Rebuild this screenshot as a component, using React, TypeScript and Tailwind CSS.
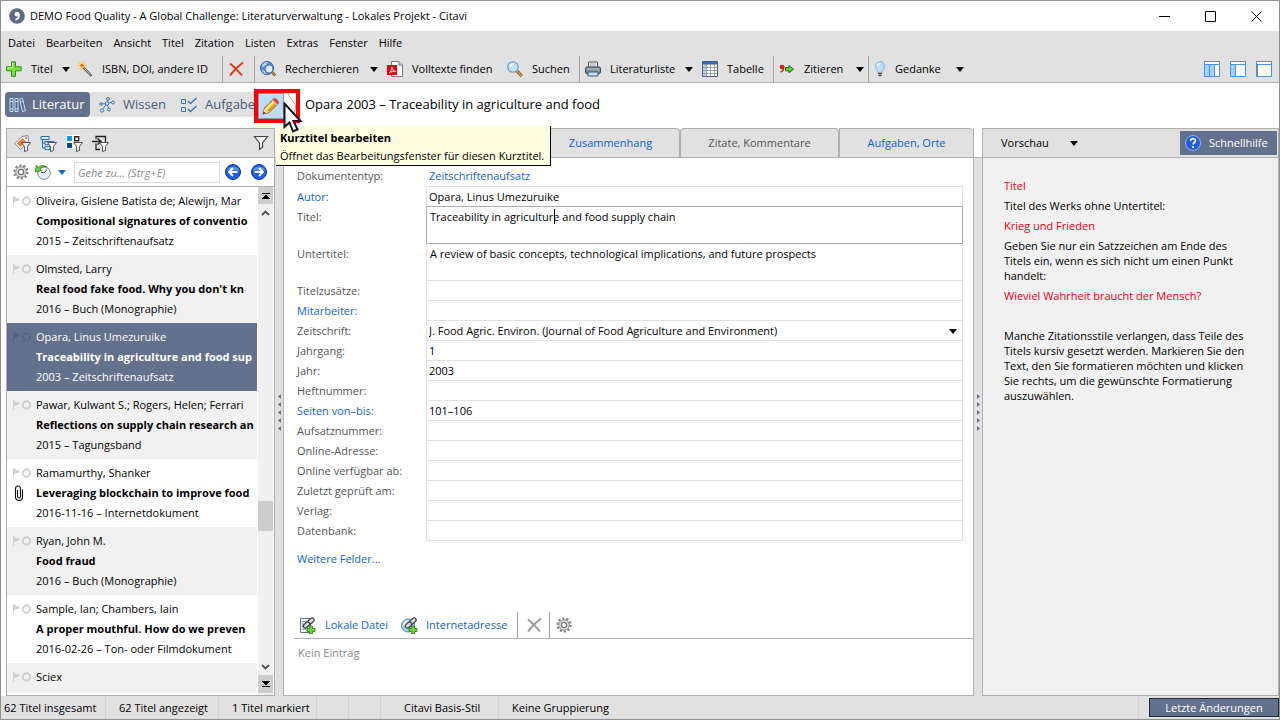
import { clsx } from 'clsx'
import type { ReactNode } from 'react'

/* ---------- icons ---------- */

const Svg = ({ children, w = 16, h = 16 }: { children: ReactNode; w?: number; h?: number }) => (
  <svg width={w} height={h} viewBox={`0 0 ${w} ${h}`} fill="none" className="shrink-0" aria-hidden="true">
    {children}
  </svg>
)

const Caret = ({ color = '#000' }: { color?: string }) => (
  <Svg w={8} h={5}><path d="M0 0h8L4 5z" fill={color} /></Svg>
)

const AppLogo = () => (
  <Svg>
    <circle cx="8" cy="8" r="7.8" fill="#5f6b85" />
    <circle cx="8" cy="6.200" r="2.400" fill="#fff" />
    <path d="M9.800 5.500c.8 3-.6 5.300-3.300 6.500" stroke="#fff" strokeWidth="1.600" />
  </Svg>
)

const PlusIcon = () => (
  <Svg>
    <path d="M5.500 .800h4v5h5.700v4H9.500v5.500h-4V9.800H.500v-4h5z" fill="#7be03c" stroke="#2f8d1c" />
    <path d="M6.500 2v4.800H1.600" stroke="#d3f7b5" />
  </Svg>
)

const WandIcon = () => (
  <Svg>
    <path d="M6.500 6.500l8 8.500" stroke="#555" strokeWidth="2.400" />
    <path d="M8 8l6 6.300" stroke="#bbb" strokeWidth="1" />
    <path d="M5 0v9M0 4.500h10M1.500 1l7 7M8.500 1l-7 7" stroke="#f6c524" strokeWidth="1" />
    <circle cx="5" cy="4.500" r="1.600" fill="#e8632a" />
  </Svg>
)

const DeleteIcon = ({ color = '#e2341d' }: { color?: string }) => (
  <Svg>
    <path d="M2 2.500C6 5.500 10 9.500 14 14.500M15 1.500C9.500 5.500 5.500 9.500 2 14.500" stroke={color} strokeWidth="2" />
  </Svg>
)

const GlobeSearchIcon = () => (
  <Svg>
    <circle cx="7" cy="7" r="6.500" fill="#5b8fd6" stroke="#2f5fa8" />
    <path d="M2 4c2-2.500 4-3 6-3L6 4 3 6zM2 9l3 1 1 3c-2-.500-3.500-2-4-4z" fill="#b9d7f5" />
    <circle cx="9" cy="8" r="4" fill="#d9efff" stroke="#5a6f8e" strokeWidth="1.200" />
    <path d="M12 11l3 3.500" stroke="#3b2b20" strokeWidth="2.600" />
    <path d="M12 11l3 3.500" stroke="#e0923e" strokeWidth="1.200" />
  </Svg>
)

const PdfIcon = () => (
  <Svg>
    <path d="M4.500 .500h7.500l3.500 3.500v11.500h-11z" fill="#fff" stroke="#777" />
    <path d="M12 .500V4h3.500" stroke="#777" fill="#ddd" />
    <path d="M0 4h10v10H0z" fill="#d90b0b" />
    <path d="M2 12C4 10.500 5 8 4.800 6c.7 2.500 1.700 4 3.700 4.500-2-.300-4.500 0-6.500 1.500z" stroke="#fff" strokeWidth=".900" />
  </Svg>
)

const SearchIcon = () => (
  <Svg>
    <path d="M10 10l4.800 5" stroke="#7a4a1c" strokeWidth="3" />
    <path d="M10 10l4.800 5" stroke="#e79b4c" strokeWidth="1.500" />
    <circle cx="6" cy="6" r="5.200" fill="#bfe3fb" stroke="#7b9cc0" strokeWidth="1.300" />
    <path d="M3 5.500C3.500 4 5 3 7 3.200" stroke="#fff" strokeWidth="1.500" />
  </Svg>
)

const PrinterIcon = () => (
  <Svg>
    <path d="M3.500 1h9v6h-9z" fill="#f5f7fa" stroke="#555" />
    <path d="M5 3h6M5 5h6" stroke="#9aa3b0" />
    <rect x=".5" y="6" width="15" height="6.500" rx="1.500" fill="#7c899b" stroke="#3a4452" />
    <path d="M1.500 8h13" stroke="#c7d0dc" />
    <path d="M3 11h10v4H3z" fill="#bfe0ff" stroke="#4d5a6b" />
    <path d="M12 9.500h2" stroke="#79d13c" />
  </Svg>
)

const TableIcon = () => (
  <Svg>
    <path d="M.500 .500h15v15H.500z" fill="#fff" stroke="#4f5f7c" />
    <path d="M1 1h14v2H1z" fill="#2f6fd0" />
    <path d="M1 3h3v12H1z" fill="#c5d2e6" />
    <path d="M1 3.500h14M1 6.500h14M1 9.500h14M1 12.500h14M4.500 3v12M8.500 3v12M12.500 3v12" stroke="#7f8ca3" strokeWidth=".800" />
  </Svg>
)

const CiteIcon = () => (
  <Svg>
    <circle cx="3" cy="6" r="2.300" fill="#e01b1b" />
    <path d="M4.600 5.500c.5 2.500-.5 4.500-3 5.500" stroke="#e01b1b" strokeWidth="1.500" />
    <path d="M6.500 6.500h3.500V4.500l4.500 3.700L10 11.800V9.800H6.500z" fill="#5fd42f" stroke="#176b12" />
  </Svg>
)

const BulbIcon = () => (
  <Svg w={12}>
    <path d="M6 .500c3 0 4.500 2 4.500 4.800C10.500 8 8.300 9 8 11.500H4C3.700 9 1.500 8 1.500 5.300 1.500 2.500 3 .500 6 .500z" fill="#bcdcfb" stroke="#8fb2dd" />
    <path d="M3.500 5C3.600 3.500 4.500 2.500 6 2.500" stroke="#fff" strokeWidth="1.500" />
    <path d="M4 12.500h4M4.500 14.500h3" stroke="#4d5560" strokeWidth="1.500" />
  </Svg>
)

const LayoutIcon = ({ cols }: { cols: number }) => (
  <Svg>
    <path d="M.500 .500h15v15H.500z" fill="#fff" stroke="#3f93e8" />
    <path d="M0 .500h16M15.500 0v4" stroke="#858585" />
    <path d="M0 3.500h16" stroke="#3f93e8" />
    {cols > 0 && <path d="M1 4h4v11H1z" fill="#a6d2fa" />}
    {cols > 1 && <path d="M6 4h4v11H6z" fill="#a6d2fa" />}
    <path d={cols > 0 ? 'M5.500 4v11' : 'M1.500 4v11'} stroke={cols > 0 ? '#3f93e8' : '#858585'} />
    {cols > 1 && <path d="M10.500 4v11" stroke="#3f93e8" />}
  </Svg>
)

const BooksIcon = () => (
  <Svg w={17}>
    <path d="M1 1.500h3v13H1zM6 1.500h3v13H6zM10.700 2l2.800-.700 2.800 12.500-2.800.700z" fill="#56688c" stroke="#c4e0ff" />
    <path d="M1 4.500h3M6 4.500h3M1 12h3M6 12h3M11.300 5l2.800-.700" stroke="#c4e0ff" />
  </Svg>
)

const KnowledgeIcon = () => (
  <Svg>
    <path d="M2 7l6-.500 6-1.500M8 6.500L9 2M8 6.500l2 6M8 6.500L3 13" stroke="#3e7fc6" />
    <g fill="#e8f1fb" stroke="#3273bd">
      <circle cx="2" cy="7" r="1.300" /><circle cx="8" cy="6.500" r="1.700" /><circle cx="9" cy="2" r="1.400" />
      <circle cx="14" cy="5.500" r="1.500" /><circle cx="10" cy="12.500" r="1.400" /><circle cx="3" cy="13.500" r="1.600" />
    </g>
  </Svg>
)

const TasksIcon = () => (
  <Svg>
    <path d="M.500 2.500h4v4h-4zM.500 10.500h4v4h-4z" stroke="#3273bd" />
    <path d="M7 4l2.500 2.500L15.500 1M7 12l2.500 2.500L15.500 9" stroke="#3273bd" strokeWidth="1.300" />
  </Svg>
)

const PencilIcon = () => (
  <Svg w={18} h={18}>
    <path d="M1 17l1.500-6L12 1.500l4.500 4.500L7 15.500z" fill="#fbd23a" stroke="#8a5a12" />
    <path d="M4 12l9-9" stroke="#fff3a8" strokeWidth="1.500" />
    <path d="M6 14l9-8.500" stroke="#e28b1c" strokeWidth="1.500" />
    <path d="M10.500 3l4.500 4.500" stroke="#c9ced6" strokeWidth="2" />
    <path d="M12 1.500c1.500-1.500 5.500 2 4.500 4.500l-1.300 1.200-4.500-4.500z" fill="#e2492f" />
    <path d="M1 17l1.500-5.500L6.500 15.500z" fill="#f3dcb8" />
    <path d="M1 17l.7-2.500 1.800 1.800z" fill="#222" />
  </Svg>
)

const Funnel = () => (
  <path d="M7.500 7.500h9l-3 4v4l-3 1v-5z" fill="#f2f2f2" stroke="#555" />
)

const TagFilterIcon = () => (
  <Svg w={17} h={17}>
    <path d="M.800 8.500L8 1.500l6-1 .500 5.500-8 8.500z" fill="#f6f6f6" stroke="#8a8a8a" />
    <path d="M3 8.500L8.500 3l3.500 3.500L6.500 12z" fill="#ef7b2b" />
    <circle cx="12" cy="3" r="1" fill="#888" />
    <Funnel />
  </Svg>
)

const TreeFilterIcon = () => (
  <Svg w={17} h={17}>
    <path d="M1 1.500h8v3H1zM5 6.500h9v3H5zM5 11.500h5v3H5z" fill="#d9ebfc" stroke="#2670bd" />
    <path d="M2.500 5v8H5M2.500 8H5" stroke="#2670bd" />
    <Funnel />
  </Svg>
)

const CategoryFilterIcon = () => (
  <Svg w={17} h={17}>
    <path d="M0 0h14v14H0z" fill="#fff" />
    <path d="M1 1h5v5H1z" fill="#1898f5" />
    <path d="M1 8h5v5H1z" fill="#004b9b" />
    <path d="M8.700 1.700h4v4h-4z" stroke="#222" strokeWidth="1.400" />
    <Funnel />
  </Svg>
)

const ImportFilterIcon = () => (
  <Svg w={17} h={17}>
    <path d="M4 4V1.500h9.500V7M4 8.500v6h4" stroke="#222" strokeWidth="1.300" />
    <path d="M0 6.500h8M5.500 3.500L9 6.500l-3.500 3" stroke="#222" strokeWidth="1.500" />
    <Funnel />
  </Svg>
)

const FunnelIcon = () => (
  <Svg>
    <path d="M1.500 1.500h13L9.500 8v4.500l-3 2V8z" fill="#fafafa" stroke="#444" strokeWidth="1.200" />
  </Svg>
)

const GearIcon = () => (
  <Svg>
    <circle cx="8" cy="8" r="6.600" stroke="#808080" strokeWidth="2" strokeDasharray="2.300 1.850" />
    <circle cx="8" cy="8" r="5.300" fill="#dcdcdc" stroke="#8c8c8c" strokeWidth="1" />
    <circle cx="8" cy="8" r="2.600" fill="#fff" stroke="#777" strokeWidth="1.300" />
  </Svg>
)

const HistoryIcon = () => (
  <Svg>
    <circle cx="9" cy="9" r="6.300" fill="#e9f2fb" stroke="#75818f" />
    <path d="M9 9l3-3.500M9 9l-3-1" stroke="#444" />
    <path d="M12 3C9 .800 5.500 1 3.300 3.300L1 1.500.500 8 6.500 6.500 4.700 5C6.500 3 9.500 2.500 12 3z" fill="#6fcf3b" stroke="#2d8420" strokeWidth=".8" />
  </Svg>
)

const RoundArrowIcon = ({ back }: { back?: boolean }) => (
  <Svg>
    <circle cx="8" cy="8" r="7.500" fill="#1d5fe0" stroke="#0d3aa5" />
    <path d="M2 6.500C3.500 1.500 12.500 1.500 14 6.500z" fill="#5d94f5" />
    <path d={back ? 'M12.500 8h-8M8 4L4 8l4 4' : 'M3.500 8h8M8 4l4 4-4 4'} stroke="#fff" strokeWidth="1.800" />
  </Svg>
)

const HelpIcon = () => (
  <Svg>
    <circle cx="8" cy="8" r="7.500" fill="#1d5fe0" stroke="#8fb2f0" />
    <path d="M5.700 6c0-3.200 4.800-3 4.800-.300C10.500 7.500 8.100 7.500 8.100 9.500M8.100 11v2" stroke="#fff" strokeWidth="1.700" />
  </Svg>
)

const Chain = () => (
  <>
    <path d="M5 10l3-3M8 7l4-4" stroke="#444" strokeWidth="1.200" />
    <rect x="8.500" y="2" width="7" height="4" rx="2" transform="rotate(-42 12 4)" fill="#ddd" stroke="#444" strokeWidth="1.300" />
    <rect x="4" y="6" width="7" height="4" rx="2" transform="rotate(-42 7.500 8)" fill="#ddd" stroke="#444" strokeWidth="1.300" />
    <path d="M10.500 9h3v2.500H16v3h-2.500V17h-3v-2.500H8v-3h2.500z" fill="#6bd832" stroke="#247b16" strokeWidth=".8" />
  </>
)

const LocalFileIcon = () => (
  <Svg w={17} h={17}>
    <path d="M1.500 1.500h10v14h-10z" fill="#e8f0fa" stroke="#5f7591" />
    <path d="M3 4.500h5M3 7h3M3 9.500h2M3 12h4" stroke="#7a8ca5" />
    <Chain />
  </Svg>
)

const WebFileIcon = () => (
  <Svg w={17} h={17}>
    <circle cx="7" cy="8.500" r="6.500" fill="#a9cff5" stroke="#6089bd" />
    <path d="M2.500 6L7 3l-1 4-3 3z" fill="#f0f7ff" />
    <Chain />
  </Svg>
)

const RowMarks = ({ selected }: { selected?: boolean }) => (
  <Svg w={18} h={10}>
    <path d="M.500 0v10M1 1l5.500 2.500L1 6z" fill={selected ? '#56627b' : '#d2d2d2'} stroke={selected ? '#56627b' : '#d2d2d2'} />
    <circle cx="13.500" cy="5" r="3.700" stroke={selected ? '#56627b' : '#cfcfcf'} strokeWidth="1.900" strokeDasharray={selected ? '2 1.500' : undefined} />
  </Svg>
)

const ClipIcon = () => (
  <Svg w={10} h={16}>
    <path d="M3.500 5v6.500a1.500 1.500 0 0 0 3 0V4C6.500 0 1.500 0 1.500 4v8c0 4.500 7 4.500 7 0V4.500" stroke="#111" strokeWidth="1.100" />
  </Svg>
)

const Pointer = () => (
  <Svg w={20} h={32}>
    <path d="M1.500 1.500v23.500l5-4.500 3.500 9 4.500-2-4-8.500h7z" fill="#fff" stroke="#15171c" strokeWidth="2" />
  </Svg>
)

/* ---------- data ---------- */

const menu = ['Datei', 'Bearbeiten', 'Ansicht', 'Titel', 'Zitation', 'Listen', 'Extras', 'Fenster', 'Hilfe']

type Tool = { label: string; icon: ReactNode; width: string; arrow?: boolean; sep?: boolean }

const tools: Tool[] = [
  { label: 'Titel', icon: <PlusIcon />, width: 'w-[71px]', arrow: true },
  { label: 'ISBN, DOI, andere ID', icon: <WandIcon />, width: 'w-[151px]', sep: true },
  { label: '', icon: <DeleteIcon />, width: 'w-8', sep: true },
  { label: 'Recherchieren', icon: <GlobeSearchIcon />, width: 'w-[127px]', arrow: true },
  { label: 'Volltexte finden', icon: <PdfIcon />, width: 'w-[120px]' },
  { label: 'Suchen', icon: <SearchIcon />, width: 'w-[78px]', sep: true },
  { label: 'Literaturliste', icon: <PrinterIcon />, width: 'w-[117px]', arrow: true },
  { label: 'Tabelle', icon: <TableIcon />, width: 'w-[77px]', sep: true },
  { label: 'Zitieren', icon: <CiteIcon />, width: 'w-[95px]', arrow: true, sep: true },
  { label: 'Gedanke', icon: <BulbIcon />, width: 'w-[99px]', arrow: true },
]

type Entry = { author: string; title?: string; info?: string; clip?: boolean; selected?: boolean }

const entries: Entry[] = [
  { author: 'Oliveira, Gislene Batista de; Alewijn, Mar', title: 'Compositional signatures of conventio', info: '2015 – Zeitschriftenaufsatz' },
  { author: 'Olmsted, Larry', title: "Real food fake food. Why you don't kn", info: '2016 – Buch (Monographie)' },
  { author: 'Opara, Linus Umezuruike', title: 'Traceability in agriculture and food sup', info: '2003 – Zeitschriftenaufsatz', selected: true },
  { author: 'Pawar, Kulwant S.; Rogers, Helen; Ferrari', title: 'Reflections on supply chain research an', info: '2015 – Tagungsband' },
  { author: 'Ramamurthy, Shanker', title: 'Leveraging blockchain to improve food', info: '2016-11-16 – Internetdokument', clip: true },
  { author: 'Ryan, John M.', title: 'Food fraud', info: '2016 – Buch (Monographie)' },
  { author: 'Sample, Ian; Chambers, Iain', title: 'A proper mouthful. How do we preven', info: '2016-02-26 – Ton- oder Filmdokument' },
  { author: 'Sciex' },
]

type Field = { label: string; value?: string; link?: boolean; tall?: boolean; active?: boolean; select?: boolean }

const fields: Field[] = [
  { label: 'Autor:', value: 'Opara, Linus Umezuruike', link: true },
  { label: 'Titel:', value: 'Traceability in agriculture and food supply chain', tall: true, active: true },
  { label: 'Untertitel:', value: 'A review of basic concepts, technological implications, and future prospects', tall: true },
  { label: 'Titelzusätze:' },
  { label: 'Mitarbeiter:', link: true },
  { label: 'Zeitschrift:', value: 'J. Food Agric. Environ. (Journal of Food Agriculture and Environment)', select: true },
  { label: 'Jahrgang:', value: '1' },
  { label: 'Jahr:', value: '2003' },
  { label: 'Heftnummer:' },
  { label: 'Seiten von–bis:', value: '101–106', link: true },
  { label: 'Aufsatznummer:' },
  { label: 'Online-Adresse:' },
  { label: 'Online verfügbar ab:' },
  { label: 'Zuletzt geprüft am:' },
  { label: 'Verlag:' },
  { label: 'Datenbank:' },
]

/* ---------- parts ---------- */

const TitleBar = () => (
  <header className="flex h-[30px] shrink-0 items-center bg-white pl-2">
    <AppLogo />
    <h1 className="ml-[5px] flex-1 text-[11px]">DEMO Food Quality - A Global Challenge: Literaturverwaltung - Lokales Projekt - Citavi</h1>
    <div className="flex">
      <button aria-label="Minimieren" className="flex w-[46px] justify-center">
        <Svg w={11} h={11}><path d="M0 5.500h11" stroke="#000" /></Svg>
      </button>
      <button aria-label="Maximieren" className="flex w-[46px] justify-center">
        <Svg w={11} h={11}><path d="M.500 .500h10v10H.500z" stroke="#000" /></Svg>
      </button>
      <button aria-label="Schließen" className="flex w-[46px] justify-center">
        <Svg w={11} h={11}><path d="M.500 .500l10 10M10.500 .500l-10 10" stroke="#000" /></Svg>
      </button>
    </div>
  </header>
)

const Toolbar = () => (
  <div className="flex h-[27px] shrink-0 items-stretch border-b border-[#b0b0b0] bg-[#e1e1e1]">
    {tools.map((t, i) => (
      <button
        key={i}
        aria-label={t.label || 'Löschen'}
        className={clsx(
          'flex items-center gap-[9px] whitespace-nowrap pl-[5px] pr-1',
          t.width,
          t.sep && 'border-r border-[#a5a5a5]',
        )}
      >
        {t.icon}
        {t.label && <span>{t.label}</span>}
        {t.arrow && <span className="ml-auto"><Caret /></span>}
      </button>
    ))}
    <div className="ml-auto flex items-center gap-[10px] pr-[7px]">
      {[2, 1, 0].map((n) => (
        <button key={n} aria-label={`Ansicht ${n + 1}`}><LayoutIcon cols={n} /></button>
      ))}
    </div>
  </div>
)

const Navigation = () => (
  <div className="relative flex h-[45px] shrink-0 items-start bg-white pl-1 text-[13px]">
    <nav className="mt-[9px] flex h-[25px] w-[249px] items-stretch rounded-l-sm bg-[#e1e1e1] text-[#4a5a78]">
      <button className="flex w-[85px] shrink-0 items-center gap-[6px] rounded-sm bg-[#64718c] pl-1 text-white">
        <BooksIcon /> Literatur
      </button>
      <button className="flex w-[84px] shrink-0 items-center gap-2 pl-[9px]">
        <KnowledgeIcon /> Wissen
      </button>
      <button className="flex shrink-0 items-center gap-2 pl-[7px]">
        <TasksIcon /> Aufgabe
      </button>
    </nav>
    <div className="relative mt-[6px] flex h-[34px] w-[46px] border-4 border-[#ff0000] bg-white">
      <button aria-label="Kurztitel bearbeiten" className="flex w-[26px] items-center justify-center border border-[#8a9bb0] bg-[#bddcf8]">
        <PencilIcon />
      </button>
      <Svg w={12} h={26}><path d="M4 0c2 6 7 9 7.500 13S9 20 9 26" stroke="#aaa" /></Svg>
    </div>
    <h2 className="mt-[11px] pl-[5px] leading-5">Opara 2003 – Traceability in agriculture and food</h2>
    <div className="absolute left-[282px] top-[19px] z-20">
      <Pointer />
    </div>
    <div role="tooltip" className="absolute left-[275px] top-[43px] z-10 h-[40px] w-[275px] border-b border-r border-black bg-[#ffffe1] px-1 pt-[3px] text-[11px] leading-[18px]">
      <p className="font-bold">Kurztitel bearbeiten</p>
      <p className="whitespace-nowrap">Öffnet das Bearbeitungsfenster für diesen Kurztitel.</p>
    </div>
  </div>
)

const EntryRow = ({ entry, shaded }: { entry: Entry; shaded: boolean }) => (
  <li
    className={clsx(
      'flex h-[68px] shrink-0 pl-[6px] pt-1 leading-5',
      entry.selected ? 'bg-[#64718c] text-white' : shaded ? 'bg-[#f1f1f1]' : 'bg-white',
    )}
  >
    <div className="flex w-[23px] shrink-0 flex-col">
      <span className="flex h-5 items-center"><RowMarks selected={entry.selected} /></span>
      {entry.clip && <span className="flex h-5 items-center pl-px"><ClipIcon /></span>}
    </div>
    <div className="min-w-0 flex-1 overflow-hidden whitespace-nowrap">
      <p>{entry.author}</p>
      <p className="font-bold">{entry.title}</p>
      <p>{entry.info}</p>
    </div>
  </li>
)

const Scrollbar = () => (
  <div className="ml-px mr-px flex w-[15px] shrink-0 flex-col items-center bg-[#f0f0f0] pb-[2px]">
    <button aria-label="Zum Anfang" className="flex h-[17px] w-full items-center justify-center bg-[#cdcdcd]">
      <Svg w={8} h={6}><path d="M0 .500h8M0 6l4-4 4 4z" stroke="#000" strokeWidth="1" fill="#000" /></Svg>
    </button>
    <button aria-label="Nach oben" className="flex h-[18px] items-center">
      <Svg w={9} h={6}><path d="M1 5l3.500-3.500L8 5" stroke="#555" strokeWidth="1.800" /></Svg>
    </button>
    <div className="flex-[280]" />
    <div className="h-[30px] w-full bg-[#cdcdcd]" />
    <div className="flex-[127]" />
    <button aria-label="Nach unten" className="flex h-[17px] items-center">
      <Svg w={9} h={6}><path d="M1 1l3.500 3.500L8 1" stroke="#555" strokeWidth="1.800" /></Svg>
    </button>
    <button aria-label="Zum Ende" className="flex h-[18px] w-full items-center justify-center bg-[#cdcdcd]">
      <Svg w={8} h={6}><path d="M0 5.500h8M0 0l4 4 4-4z" stroke="#000" strokeWidth="1" fill="#000" /></Svg>
    </button>
  </div>
)

const TitleList = () => (
  <aside className="flex w-[269px] shrink-0 flex-col border border-[#a9acb0] bg-white">
    <div className="flex h-[29px] shrink-0 items-center gap-[9px] border-b border-[#b0b0b0] bg-[#e1e1e1] pl-[7px] pr-[5px]">
      <button aria-label="Schlagwörter"><TagFilterIcon /></button>
      <button aria-label="Kategorien"><TreeFilterIcon /></button>
      <button aria-label="Gruppen"><CategoryFilterIcon /></button>
      <button aria-label="Importe"><ImportFilterIcon /></button>
      <button aria-label="Filter" className="ml-auto"><FunnelIcon /></button>
    </div>
    <div className="flex h-[29px] shrink-0 items-center border-b border-[#b0b0b0] pl-[6px] pr-[7px]">
      <button aria-label="Optionen"><GearIcon /></button>
      <button aria-label="Verlauf" className="ml-[6px] flex items-center gap-[7px]"><HistoryIcon /><Caret color="#0f6fd1" /></button>
      <input
        aria-label="Gehe zu"
        placeholder="Gehe zu... (Strg+E)"
        className="ml-2 mr-[5px] h-[21px] min-w-0 flex-1 border border-[#dcdcdc] px-[3px] italic placeholder:text-[#8a8a8a]"
      />
      <button aria-label="Zurück"><RoundArrowIcon back /></button>
      <button aria-label="Vorwärts" className="ml-[10px]"><RoundArrowIcon /></button>
    </div>
    <div className="flex min-h-0 flex-1">
      <ul className="mb-[2px] flex min-w-0 flex-1 flex-col overflow-hidden">
        {entries.map((e, i) => <EntryRow key={e.author} entry={e} shaded={i % 2 === 1} />)}
      </ul>
      <Scrollbar />
    </div>
  </aside>
)

const Splitter = ({ left }: { left?: boolean }) => (
  <div className="mt-[29px] flex w-2 shrink-0 flex-col items-center justify-center gap-[3px] border-t border-[#b0b0b0] bg-[#e1e1e1] pb-[29px]">
    {[0, 1, 2, 3, 4].map((n) => (
      <Svg key={n} w={3} h={5}><path d={left ? 'M3 0v5L0 2.500z' : 'M0 0v5l3-2.500z'} fill="#64718c" /></Svg>
    ))}
  </div>
)

const FieldRow = ({ field }: { field: Field }) => {
  const id = field.label.replace(/\W/g, '').toLowerCase()
  return (
    <div className={clsx('flex', field.tall ? 'h-[37px]' : 'h-5')}>
      <label htmlFor={id} className={clsx('w-[129px] shrink-0 whitespace-nowrap pt-px leading-5', field.link ? 'text-[#0d63cc]' : 'text-[#555]')}>
        {field.label}
      </label>
      <div
        className={clsx(
          'relative -mb-px flex min-w-0 flex-1 border',
          field.active ? 'z-10 border-[#adb0b0]' : 'border-[#e4e0e2]',
        )}
      >
        {field.tall && <textarea id={id} defaultValue={field.value} className="block w-full resize-none overflow-hidden px-[3px] leading-5" />}
        {!field.tall && !field.select && <input id={id} defaultValue={field.value} className="w-full px-[2px] pt-[2px]" />}
        {field.select && (
          <>
            <select id={id} className="w-full appearance-none px-[2px] pt-[2px]">
              <option>{field.value}</option>
            </select>
            <span className="pointer-events-none absolute right-[5px] top-2"><Caret /></span>
          </>
        )}
        {field.active && <span className="absolute left-[127px] top-[2px] h-[15px] w-px bg-black" />}
      </div>
    </div>
  )
}

const Editor = () => (
  <main className="flex min-w-0 flex-1 flex-col border-x border-b border-[#b0b0b0]">
    <div className="flex h-[30px] shrink-0 border-b border-[#b0b0b0] bg-white">
      <div className="flex-1 rounded-t border-t border-[#b0b0b0] bg-[#e1e1e1]" />
      <button className="w-[139px] rounded-t border-x border-t border-[#b0b0b0] bg-[#e1e1e1] text-[#0d63cc]">Zusammenhang</button>
      <button className="w-[159px] rounded-t border-x border-t border-[#b0b0b0] bg-[#e1e1e1] text-[#555]">Zitate, Kommentare</button>
      <button className="w-[134px] rounded-tr border-l border-t border-[#b0b0b0] bg-[#e1e1e1] text-[#0d63cc]">Aufgaben, Orte</button>
    </div>
    <div className="pl-[13px] pr-[10px] pt-2">
      <div className="flex h-5 leading-5">
        <span className="w-[132px] text-[#555]">Dokumententyp:</span>
        <a href="#typ" className="text-[#0d63cc]">Zeitschriftenaufsatz</a>
      </div>
      {fields.map((f) => <FieldRow key={f.label} field={f} />)}
      <a href="#felder" className="mt-[9px] block leading-5 text-[#0d63cc]">Weitere Felder...</a>
    </div>
    <div className="ml-[10px] mt-auto flex h-[27px] shrink-0 items-stretch border-b border-[#b0b0b0] pl-[5px] text-[#0d63cc]">
      <button className="flex w-[102px] items-center gap-[9px] whitespace-nowrap"><LocalFileIcon /> Lokale Datei</button>
      <button className="flex w-[117px] items-center gap-2 whitespace-nowrap border-r border-[#a5a5a5]"><WebFileIcon /> Internetadresse</button>
      <button aria-label="Entfernen" className="flex w-8 items-center justify-center border-r border-[#a5a5a5]"><DeleteIcon color="#999" /></button>
      <button aria-label="Einstellungen" className="ml-[6px]"><GearIcon /></button>
    </div>
    <p className="h-[56px] shrink-0 pl-[14px] pt-1 leading-5 text-[#888]">Kein Eintrag</p>
  </main>
)

const HelpPanel = () => (
  <aside className="flex w-[297px] shrink-0 flex-col border border-[#b0b0b0] bg-[#f1f1f1]">
    <div className="flex h-[29px] shrink-0 items-center justify-between border-b border-[#b0b0b0] bg-[#e1e1e1] pl-[18px] pr-px">
      <button className="flex w-[77px] items-center justify-between">Vorschau <Caret /></button>
      <button className="flex h-6 w-[97px] items-center gap-2 bg-[#64718c] pl-[5px] text-white"><HelpIcon /> Schnellhilfe</button>
    </div>
    <div className="flex flex-col gap-[5px] px-[21px] pt-5 leading-[15px]">
      <p className="text-[#e60012]">Titel</p>
      <p>Titel des Werks ohne Untertitel:</p>
      <p className="text-[#e60012]">Krieg und Frieden</p>
      <p>Geben Sie nur ein Satzzeichen am Ende des<br />Titels ein, wenn es sich nicht um einen Punkt<br />handelt:</p>
      <p className="text-[#e60012]">Wieviel Wahrheit braucht der Mensch?</p>
      <p className="mt-5">
        Manche Zitationsstile verlangen, dass Teile des<br />Titels kursiv gesetzt werden. Markieren Sie den<br />
        Text, den Sie formatieren möchten und klicken<br />Sie rechts, um die gewünschte Formatierung<br />auszuwählen.
      </p>
    </div>
  </aside>
)

const StatusBar = () => (
  <footer className="flex h-[23px] shrink-0 items-stretch bg-[#e1e1e1] leading-[23px] whitespace-nowrap">
    <span className="w-[105px] border-r border-[#d2d2d2] pl-[3px]">62 Titel insgesamt</span>
    <span className="w-[113px] border-r border-[#d2d2d2] pl-[13px]">62 Titel angezeigt</span>
    <span className="w-[98px] border-r border-[#d2d2d2] pl-[13px]">1 Titel markiert</span>
    <span className="w-8 border-r border-[#d2d2d2]" />
    <span className="w-8 border-r border-[#d2d2d2]" />
    <span className="w-[118px] border-r border-[#d2d2d2] pl-[23px]">Citavi Basis-Stil</span>
    <span className="flex-1 border-r border-[#d2d2d2] pl-[13px]">Keine Gruppierung</span>
    <button className="ml-[10px] mt-[2px] h-[19px] w-[130px] border border-[#222936] bg-[#64718c] leading-[17px] text-white">Letzte Änderungen</button>
  </footer>
)

const App = () => {
  return (
    <div className="flex h-screen flex-col overflow-hidden border border-[#909090] bg-white font-['Open_Sans','Noto_Sans',sans-serif] text-[11px] text-black">
      <TitleBar />
      <nav className="flex h-[25px] shrink-0 items-center gap-[11px] bg-[#e1e1e1] pl-[7px]">
        {menu.map((m) => <button key={m}>{m}</button>)}
      </nav>
      <Toolbar />
      <Navigation />
      <div className="flex min-h-0 flex-1 pl-[5px]">
        <TitleList />
        <Splitter left />
        <Editor />
        <Splitter />
        <HelpPanel />
      </div>
      <StatusBar />
    </div>
  )
}

export default App
